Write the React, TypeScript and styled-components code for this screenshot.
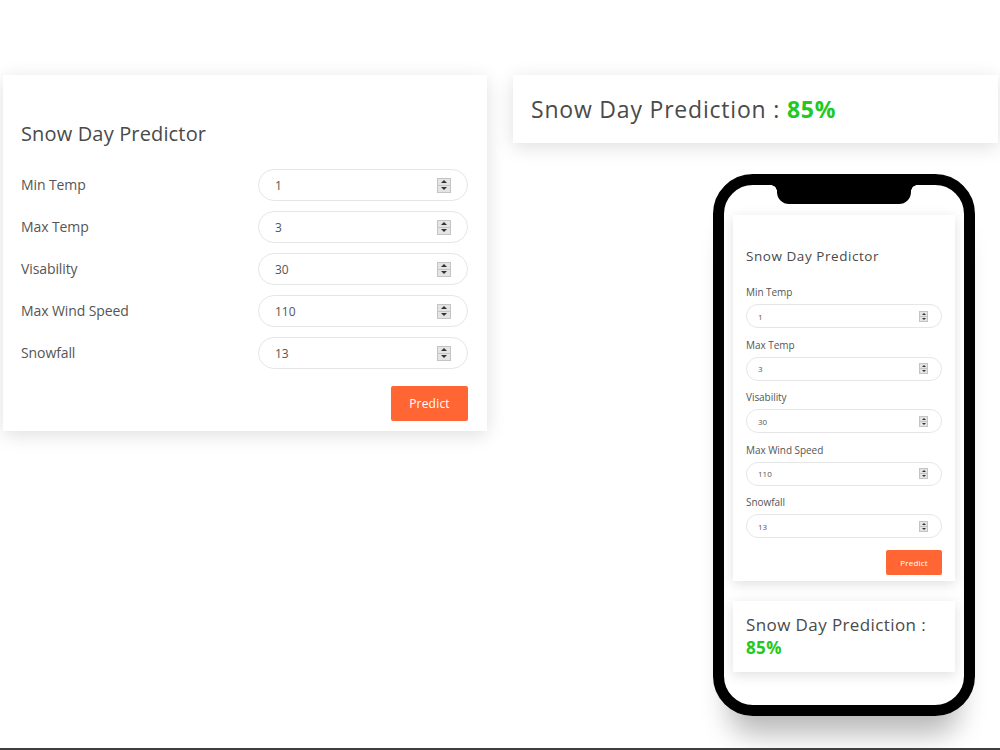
import React from "react";
import styled, { createGlobalStyle } from "styled-components";

const GlobalStyle = createGlobalStyle`
  html, body {
    margin: 0;
    padding: 0;
    background: #ffffff;
  }
  body {
    font-family: "Open Sans", "Noto Sans", sans-serif;
    color: #4d4d4d;
  }
  * { box-sizing: border-box; }
`;

const Page = styled.div`
  width: 1000px;
  height: 750px;
  overflow: hidden;
  border-bottom: 2px solid #3f3f3f;
  display: flex;
  align-items: flex-start;
  gap: 26px;
  padding: 75px 0 0 3px;
`;

/* ---------- desktop predictor card ---------- */

const Card = styled.section`
  width: 484px;
  height: 356px;
  background: #fff;
  padding: 47px 19px 10px 18px;
  box-shadow: 0 4px 18px rgba(0, 0, 0, 0.13);
  display: flex;
  flex-direction: column;
`;

const Title = styled.h1<{ $small?: boolean }>`
  margin: 0;
  font-weight: 400;
  color: #4a4a4a;
  font-size: ${(p) => (p.$small ? "13.5px" : "20px")};
  line-height: ${(p) => (p.$small ? "17px" : "24px")};
  letter-spacing: ${(p) => (p.$small ? "0.55px" : "0.15px")};
`;

const Rows = styled.div`
  margin-top: 23px;
  display: flex;
  flex-direction: column;
  gap: 10px;
`;

const Row = styled.div`
  display: grid;
  grid-template-columns: 1fr 210px;
  align-items: center;
`;

const Label = styled.label<{ $small?: boolean }>`
  color: #555;
  font-size: ${(p) => (p.$small ? "10px" : "14px")};
  line-height: ${(p) => (p.$small ? "13px" : "18px")};
  letter-spacing: ${(p) => (p.$small ? "-0.05px" : "-0.1px")};
`;

const Pill = styled.div<{ $small?: boolean }>`
  display: flex;
  align-items: center;
  height: ${(p) => (p.$small ? "24px" : "32px")};
  border: 1px solid #e6e6e6;
  border-radius: ${(p) => (p.$small ? "12px" : "16px")};
  padding: ${(p) => (p.$small ? "0 13px 0 11px" : "0 16px 0 16px")};
  background: #fff;
`;

const Value = styled.input<{ $small?: boolean }>`
  flex: 1;
  min-width: 0;
  border: none;
  outline: none;
  background: transparent;
  padding: 0;
  font-family: inherit;
  color: #555;
  font-size: ${(p) => (p.$small ? "8px" : "12px")};
`;

const SpinBox = styled.div<{ $small?: boolean }>`
  width: ${(p) => (p.$small ? "9px" : "14px")};
  height: ${(p) => (p.$small ? "11px" : "15px")};
  background: #e4e4e4;
  border: 1px solid #c4c4c4;
  display: flex;
  flex-direction: column;
`;

const SpinHalf = styled.div<{ $down?: boolean; $small?: boolean }>`
  flex: 1;
  display: flex;
  align-items: center;
  justify-content: center;
  border-top: ${(p) => (p.$down ? "1px solid #c4c4c4" : "none")};
  &::before {
    content: "";
    width: 0;
    height: 0;
    border-left: ${(p) => (p.$small ? "2px" : "3px")} solid transparent;
    border-right: ${(p) => (p.$small ? "2px" : "3px")} solid transparent;
    ${(p) =>
      p.$down
        ? `border-top: ${p.$small ? "2px" : "3px"} solid #333;`
        : `border-bottom: ${p.$small ? "2px" : "3px"} solid #333;`}
  }
`;

const Spinner = ({ small }: { small?: boolean }) => (
  <SpinBox $small={small}>
    <SpinHalf $small={small} />
    <SpinHalf $small={small} $down />
  </SpinBox>
);

const Footer = styled.div<{ $small?: boolean }>`
  display: flex;
  justify-content: flex-end;
  margin-top: ${(p) => (p.$small ? "11.5px" : "17px")};
`;

const PredictButton = styled.button<{ $small?: boolean }>`
  width: ${(p) => (p.$small ? "56px" : "77px")};
  height: ${(p) => (p.$small ? "25px" : "35px")};
  border: none;
  border-radius: 2px;
  background: #ff6633;
  color: #fff;
  font-family: inherit;
  font-size: ${(p) => (p.$small ? "8px" : "12px")};
  letter-spacing: 0.2px;
  padding: 0;
`;

/* ---------- result panel + phone ---------- */

const RightColumn = styled.div`
  width: 485px;
  display: flex;
  flex-direction: column;
  align-items: flex-start;
`;

const ResultCard = styled.section`
  width: 485px;
  height: 68px;
  background: #fff;
  padding: 0 18px;
  display: flex;
  align-items: center;
  box-shadow: 0 4px 18px rgba(0, 0, 0, 0.13);
`;

const ResultText = styled.p<{ $small?: boolean }>`
  margin: 0;
  color: #4a4a4a;
  font-size: ${(p) => (p.$small ? "17px" : "23px")};
  line-height: ${(p) => (p.$small ? "23px" : "28px")};
  letter-spacing: ${(p) => (p.$small ? "0.4px" : "0.8px")};
`;

const Percent = styled.strong`
  color: #22c922;
  font-weight: 700;
`;

const Phone = styled.div`
  position: relative;
  margin: 31px 0 0 200px;
  width: 262px;
  height: 542px;
  border: 11px solid #000;
  border-radius: 40px;
  background: #fff;
  box-shadow: 0 34px 28px -16px rgba(0, 0, 0, 0.28);
`;

const Notch = styled.div`
  position: absolute;
  top: 0;
  left: 53px;
  width: 134px;
  height: 19px;
  background: #000;
  border-radius: 0 0 12px 12px;
  z-index: 2;
  &::before,
  &::after {
    content: "";
    position: absolute;
    top: 0;
    width: 6px;
    height: 6px;
  }
  &::before {
    left: -6px;
    background: radial-gradient(circle at 0 100%, transparent 5.5px, #000 6px);
  }
  &::after {
    right: -6px;
    background: radial-gradient(circle at 100% 100%, transparent 5.5px, #000 6px);
  }
`;

const Screen = styled.div`
  height: 100%;
  border-radius: 29px;
  padding: 30px 9px 0;
  display: flex;
  flex-direction: column;
  gap: 20px;
`;

const MiniCard = styled.section`
  width: 222px;
  background: #fff;
  padding: 33px 13px 6px;
  box-shadow: 0 3px 12px rgba(0, 0, 0, 0.13);
  display: flex;
  flex-direction: column;
`;

const Fields = styled.div`
  margin-top: 21px;
  display: flex;
  flex-direction: column;
  gap: 10.5px;
`;

const Field = styled.div`
  display: flex;
  flex-direction: column;
  gap: 5px;
`;

const MiniResult = styled.section`
  width: 222px;
  height: 71px;
  background: #fff;
  padding: 12.5px 13px;
  box-shadow: 0 3px 12px rgba(0, 0, 0, 0.13);
`;

const inputs = [
  { label: "Min Temp", value: "1" },
  { label: "Max Temp", value: "3" },
  { label: "Visability", value: "30" },
  { label: "Max Wind Speed", value: "110" },
  { label: "Snowfall", value: "13" },
];

export default function App() {
  return (
    <>
      <GlobalStyle />
      <Page>
        <Card>
          <Title>Snow Day Predictor</Title>
          <Rows>
            {inputs.map((f) => (
              <Row key={f.label}>
                <Label>{f.label}</Label>
                <Pill>
                  <Value type="text" defaultValue={f.value} />
                  <Spinner />
                </Pill>
              </Row>
            ))}
          </Rows>
          <Footer>
            <PredictButton>Predict</PredictButton>
          </Footer>
        </Card>

        <RightColumn>
          <ResultCard>
            <ResultText>
              Snow Day Prediction : <Percent>85%</Percent>
            </ResultText>
          </ResultCard>

          <Phone>
            <Notch />
            <Screen>
              <MiniCard>
                <Title $small>Snow Day Predictor</Title>
                <Fields>
                  {inputs.map((f) => (
                    <Field key={f.label}>
                      <Label $small>{f.label}</Label>
                      <Pill $small>
                        <Value $small type="text" defaultValue={f.value} />
                        <Spinner small />
                      </Pill>
                    </Field>
                  ))}
                </Fields>
                <Footer $small>
                  <PredictButton $small>Predict</PredictButton>
                </Footer>
              </MiniCard>
              <MiniResult>
                <ResultText $small>
                  Snow Day Prediction :
                  <br />
                  <Percent>85%</Percent>
                </ResultText>
              </MiniResult>
            </Screen>
          </Phone>
        </RightColumn>
      </Page>
    </>
  );
}
